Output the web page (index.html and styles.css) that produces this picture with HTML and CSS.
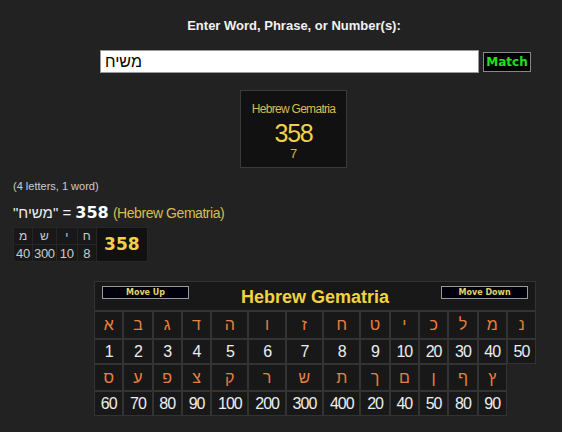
FILE: index.html
```html
<!DOCTYPE html>
<html>

<head>
  <meta charset="utf-8">
  <link rel="stylesheet" href="styles.css">
</head>

<body>
  <div class="entry">
    <div class="entry-title">Enter Word, Phrase, or Number(s):</div>
    <div class="entry-row">
      <input class="entry-input" type="text" value="משיח">
      <button class="match-btn">Match</button>
    </div>
  </div>

  <div class="score-box">
    <div class="score-name">Hebrew Gematria</div>
    <div class="score-value">358</div>
    <div class="score-reduced">7</div>
  </div>

  <div class="summary">
    <div class="summary-count">(4 letters, 1 word)</div>
    <div class="summary-line">"<bdi>משיח</bdi>" = <b class="summary-total">358</b> <span class="summary-cipher">(Hebrew Gematria)</span></div>

    <table class="breakdown">
      <tr class="bd-letters">
        <td>מ</td>
        <td>ש</td>
        <td>י</td>
        <td>ח</td>
        <td class="bd-total" rowspan="2">358</td>
      </tr>
      <tr class="bd-values">
        <td>40</td>
        <td>300</td>
        <td>10</td>
        <td>8</td>
      </tr>
    </table>
  </div>

  <table class="cipher">
    <tr>
      <td class="cipher-head" colspan="14">
        <div class="head-bar">
          <button class="move-btn">Move Up</button>
          <span class="cipher-title">Hebrew Gematria</span>
          <button class="move-btn">Move Down</button>
        </div>
      </td>
    </tr>
    <tr class="letters">
      <td>א</td><td>ב</td><td>ג</td><td>ד</td>
      <td class="wide">ה</td><td class="wide">ו</td><td class="wide">ז</td><td class="wide">ח</td>
      <td>ט</td><td>י</td><td>כ</td><td>ל</td><td>מ</td><td>נ</td>
    </tr>
    <tr class="values">
      <td>1</td><td>2</td><td>3</td><td>4</td><td>5</td><td>6</td><td>7</td>
      <td>8</td><td>9</td><td>10</td><td>20</td><td>30</td><td>40</td><td>50</td>
    </tr>
    <tr class="letters low">
      <td>ס</td><td>ע</td><td>פ</td><td>צ</td><td>ק</td><td>ר</td><td>ש</td>
      <td>ת</td><td>ך</td><td>ם</td><td>ן</td><td>ף</td><td>ץ</td>
    </tr>
    <tr class="values">
      <td>60</td><td>70</td><td>80</td><td>90</td><td>100</td><td>200</td><td>300</td>
      <td>400</td><td>20</td><td>40</td><td>50</td><td>80</td><td>90</td>
    </tr>
  </table>
</body>

</html>
```

FILE: styles.css
```css
* {
  box-sizing: border-box;
}

html,
body {
  margin: 0;
  padding: 0;
}

body {
  background: #222;
  color: #eee;
  font-family: "Liberation Sans", Arial, sans-serif;
}

/* search form */

.entry {
  padding-left: 26px;
}

.entry-title {
  padding-top: 18px;
  font-size: 13px;
  line-height: 15px;
  font-weight: bold;
  text-align: center;
  color: #f2f2f2;
}

.entry-row {
  display: flex;
  align-items: center;
  gap: 4px;
  margin-top: 17px;
  margin-left: 74px;
}

.entry-input {
  width: 379px;
  height: 23px;
  margin: 0;
  padding: 0 4px;
  border: 1px solid #999;
  background: #fff;
  color: #000;
  font-family: "Liberation Sans", Arial, sans-serif;
  font-size: 16px;
  outline: none;
}

.match-btn {
  width: 48px;
  height: 20px;
  margin: 0;
  padding: 0;
  border: 1px solid #888;
  background: #000;
  color: #22e022;
  font-family: "DejaVu Sans", Verdana, sans-serif;
  font-size: 12px;
  font-weight: bold;
}

/* score box */

.score-box {
  width: 107px;
  height: 78px;
  margin: 17px 0 0 240px;
  padding-top: 11px;
  border: 1px solid #3a3a3a;
  background: #111;
  text-align: center;
}

.score-name {
  font-size: 12px;
  line-height: 14px;
  letter-spacing: -0.7px;
  color: #d9bd4e;
}

.score-value {
  margin-top: 4px;
  font-size: 25px;
  line-height: 26px;
  letter-spacing: -1.2px;
  color: #f4d04a;
}

.score-reduced {
  margin-top: 1px;
  font-size: 13px;
  line-height: 14px;
  color: #d2b444;
}

/* summary */

.summary {
  padding-left: 13px;
}

.summary-count {
  margin-top: 12px;
  font-size: 11px;
  line-height: 13px;
  color: #ccc;
}

.summary-line {
  margin-top: 10px;
  font-size: 15px;
  line-height: 20px;
  color: #eee;
}

.summary-total {
  font-family: "DejaVu Sans", Verdana, sans-serif;
  font-size: 16px;
  color: #fff;
}

.summary-cipher {
  font-size: 14px;
  letter-spacing: -0.45px;
  color: #d9bd4e;
}

.breakdown {
  margin-top: 4px;
  border-collapse: collapse;
  background: #181818;
}

.breakdown td {
  height: 17px;
  padding: 0 1px;
  border: 1px solid #262626;
  font-size: 12px;
  line-height: 15px;
  text-align: center;
  color: #ccc;
}

.bd-values td {
  font-size: 13px;
  letter-spacing: -0.3px;
}

.bd-letters td:nth-child(1),
.bd-letters td:nth-child(4) {
  width: 19px;
}

.bd-letters td:nth-child(2) {
  width: 22px;
}

.bd-letters td:nth-child(3) {
  width: 21px;
}

.breakdown .bd-total {
  width: 51px;
  padding: 0;
  background: #111;
  font-family: "DejaVu Sans", Verdana, sans-serif;
  font-size: 17px;
  font-weight: bold;
  letter-spacing: 0;
  color: #f4d04a;
}

/* cipher chart */

.cipher {
  margin: 19px 0 0 94px;
  border-collapse: separate;
  border-spacing: 0;
}

.cipher td {
  width: 29.3px;
  padding: 0;
  border: 1px solid #333;
  background: #181818;
  text-align: center;
}

.cipher td.wide {
  width: 37.3px;
}

.cipher td.cipher-head {
  width: auto;
  height: 30px;
  padding: 4px 7px 0;
  vertical-align: top;
}

.head-bar {
  display: flex;
  justify-content: space-between;
  align-items: flex-start;
}

.move-btn {
  width: 87px;
  height: 13px;
  margin: 0;
  padding: 0;
  border: 1px solid #999;
  background: #00000c;
  color: #e2d468;
  font-family: "DejaVu Sans", Verdana, sans-serif;
  font-size: 8px;
  font-weight: bold;
  line-height: 11px;
}

.cipher-title {
  font-size: 18px;
  line-height: 22px;
  font-weight: bold;
  color: #f2d23e;
}

.cipher .letters td {
  height: 28px;
  font-size: 16px;
  color: #e8813f;
}

.cipher .letters.low td {
  height: 27px;
}

.cipher .values td {
  height: 25px;
  font-size: 16px;
  letter-spacing: -1px;
  color: #eee;
}
```
